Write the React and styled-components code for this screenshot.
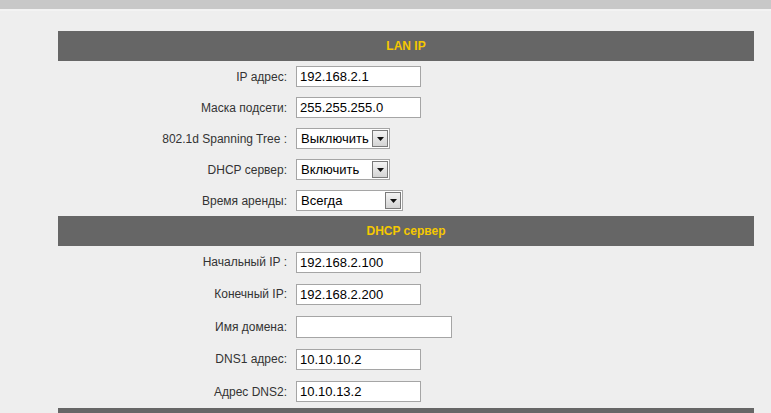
import React from "react";
import styled, { createGlobalStyle } from "styled-components";

const Global = createGlobalStyle`
  html, body { margin: 0; padding: 0; background: #eeeeee; }
  body { font-family: "Liberation Sans", Arial, sans-serif; overflow: hidden; }
`;

const TopBar = styled.div`
  height: 9px;
  background: #c8c8c8;
  border-bottom: 2px solid #f3f3f3;
`;

const Wrap = styled.div`
  padding: 20px 0 0 58px;
  width: 696px;
`;

const Header = styled.div`
  height: 30px;
  background: #666666;
  color: #f5c800;
  font-weight: bold;
  font-size: 12px;
  display: flex;
  align-items: center;
  justify-content: center;
`;

const Row = styled.div`
  display: grid;
  grid-template-columns: 229px 1fr;
  align-items: center;
  height: ${(p) => p.$h}px;
`;

const Label = styled.div`
  text-align: right;
  font-size: 12px;
  color: #333333;
`;

const Value = styled.div`
  padding-left: 9px;
  display: flex;
  align-items: center;
`;

const Input = styled.div`
  box-sizing: border-box;
  width: ${(p) => p.$w}px;
  height: ${(p) => p.$hh || 21}px;
  border: 1px solid #a5a5a5;
  background: #ffffff;
  font-size: 13px;
  color: #000;
  padding-left: 3px;
  display: flex;
  align-items: center;
`;

const Select = styled.div`
  box-sizing: border-box;
  width: ${(p) => p.$w}px;
  height: 21px;
  border: 1px solid #a5a5a5;
  background: #ffffff;
  font-size: 13px;
  color: #000;
  padding-left: 4px;
  display: flex;
  align-items: center;
  justify-content: space-between;
`;

const Arrow = styled.div`
  box-sizing: border-box;
  width: 16px;
  height: 17px;
  margin-right: 1px;
  border: 1px solid #7a7a7a;
  background: linear-gradient(#f4f4f4, #d4d4d4);
  display: flex;
  align-items: center;
  justify-content: center;
`;

const Tri = () => (
  <svg width="7" height="4" viewBox="0 0 7 4">
    <path d="M0 0h7L3.5 4z" fill="#111" />
  </svg>
);

const Field = ({ label, h, children }) => (
  <Row $h={h}>
    <Label>{label}</Label>
    <Value>{children}</Value>
  </Row>
);

const Sel = ({ w, text }) => (
  <Select $w={w}>
    <span>{text}</span>
    <Arrow>
      <Tri />
    </Arrow>
  </Select>
);

export default function App() {
  return (
    <>
      <Global />
      <TopBar />
      <Wrap>
        <Header>LAN IP</Header>
        <Field label="IP адрес:" h={31}>
          <Input $w={125}>192.168.2.1</Input>
        </Field>
        <Field label="Маска подсети:" h={31}>
          <Input $w={125}>255.255.255.0</Input>
        </Field>
        <Field label="802.1d Spanning Tree :" h={31}>
          <Sel w={94} text="Выключить" />
        </Field>
        <Field label="DHCP сервер:" h={31}>
          <Sel w={94} text="Включить" />
        </Field>
        <Field label="Время аренды:" h={31}>
          <Sel w={107} text="Всегда" />
        </Field>
        <Header>DHCP сервер</Header>
        <Field label="Начальный IP :" h={32}>
          <Input $w={125}>192.168.2.100</Input>
        </Field>
        <Field label="Конечный IP:" h={32}>
          <Input $w={125}>192.168.2.200</Input>
        </Field>
        <Field label="Имя домена:" h={33}>
          <Input $w={156} $hh={22}></Input>
        </Field>
        <Field label="DNS1 адрес:" h={32}>
          <Input $w={125}>10.10.10.2</Input>
        </Field>
        <Field label="Адрес DNS2:" h={33}>
          <Input $w={125}>10.10.13.2</Input>
        </Field>
        <Header />
      </Wrap>
    </>
  );
}
